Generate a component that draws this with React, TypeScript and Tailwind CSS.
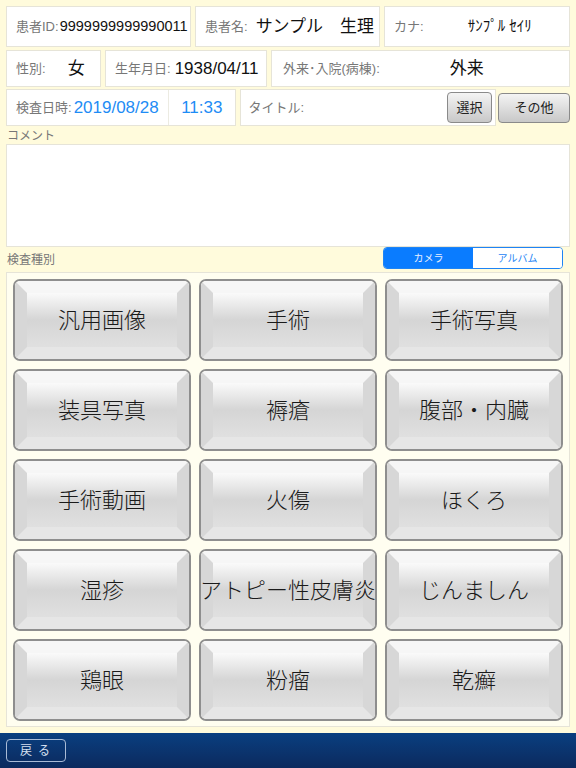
import React, { useState } from 'react';

const font = { fontFamily: '"Liberation Sans", "Noto Sans CJK JP", sans-serif' };

const categories = [
  '汎用画像', '手術', '手術写真',
  '装具写真', '褥瘡', '腹部・内臓',
  '手術動画', '火傷', 'ほくろ',
  '湿疹', 'アトピー性皮膚炎', 'じんましん',
  '鶏眼', '粉瘤', '乾癬',
];

function Cell({ className = '', children }: { className?: string; children: React.ReactNode }) {
  return (
    <div className={`bg-white border border-[#e6e4d8] flex items-center ${className}`}>{children}</div>
  );
}

function Label({ children, className = '' }: { children: React.ReactNode; className?: string }) {
  return <span className={`text-[13px] text-[#777] whitespace-nowrap ${className}`}>{children}</span>;
}

function BevelButton({ label }: { label: string }) {
  return (
    <button className="h-[82px] rounded-[7px] border-2 border-[#8e8e8e] overflow-hidden p-0 bg-[#ddd]">
      <div className="h-full w-full border-x-[12px] border-y-[12px] border-t-[#f6f6f6] border-b-[#e6e6e6] border-l-[#d7d7d7] border-r-[#d7d7d7] bg-gradient-to-b from-[#fafafa] via-[#d5d5d5] to-[#e0e0e0] flex items-center justify-center">
        <span className="text-[22px] font-light text-[#1a1a1a] whitespace-nowrap -mx-[12px]">{label}</span>
      </div>
    </button>
  );
}

export default function App() {
  const [source, setSource] = useState<'camera' | 'album'>('camera');

  return (
    <div style={font} className="w-[576px] h-[768px] bg-[#fffbdc] flex flex-col overflow-hidden">
      <div className="flex-1 px-[6px] pt-[6px] flex flex-col">
        {/* row 1 */}
        <div className="flex gap-[4px] h-[41px]">
          <Cell className="w-[185px] pl-[9px]">
            <Label>患者ID:</Label>
            <span className="text-[14.5px] text-[#111] ml-[1px]">9999999999990011</span>
          </Cell>
          <Cell className="w-[185px] pl-[9px]">
            <Label>患者名:</Label>
            <span className="text-[17px] text-[#111] ml-[8px] whitespace-nowrap">サンプル　生理</span>
          </Cell>
          <Cell className="flex-1 pl-[9px]">
            <Label>カナ:</Label>
            <span className="text-[15px] text-[#111] ml-[44px] whitespace-nowrap">ｻﾝﾌﾟﾙ ｾｲﾘ</span>
          </Cell>
        </div>

        {/* row 2 */}
        <div className="flex gap-[4px] h-[37px] mt-[3px]">
          <Cell className="w-[95px] pl-[9px]">
            <Label>性別:</Label>
            <span className="text-[17px] text-[#111] ml-[22px]">女</span>
          </Cell>
          <Cell className="w-[162px] pl-[9px]">
            <Label>生年月日:</Label>
            <span className="text-[17px] text-[#111] ml-[4px]">1938/04/11</span>
          </Cell>
          <Cell className="flex-1 pl-[11px]">
            <Label>外来･入院(病棟):</Label>
            <span className="text-[17px] text-[#111] ml-[70px]">外来</span>
          </Cell>
        </div>

        {/* row 3 */}
        <div className="flex h-[37px] mt-[2px] items-start">
          <Cell className="w-[230px] h-[37px]">
            <div className="w-[162px] h-full flex items-center pl-[9px] border-r border-[#ecebe2]">
              <Label>検査日時:</Label>
              <span className="text-[17px] text-[#1e8cf5] ml-[2px]">2019/08/28</span>
            </div>
            <div className="flex-1 flex items-center justify-center">
              <span className="text-[17px] text-[#1e8cf5]">11:33</span>
            </div>
          </Cell>
          <Cell className="ml-[4px] w-[257px] h-[37px] pl-[8px] pr-[3px] justify-between">
            <Label>タイトル:</Label>
            <button className="h-[31px] w-[45px] rounded-[4px] border border-[#8a8a8a] bg-gradient-to-b from-[#f4f4f4] to-[#c8c8c8] text-[13px] text-[#222]">
              選択
            </button>
          </Cell>
          <button className="ml-[2px] mt-[4px] h-[30px] w-[72px] rounded-[4px] border border-[#8a8a8a] bg-gradient-to-b from-[#f4f4f4] to-[#c8c8c8] text-[13px] text-[#222]">
            その他
          </button>
        </div>

        <div className="text-[12px] text-[#777] mt-[2px] pl-[1px] h-[16px] leading-[16px]">コメント</div>
        <div className="h-[103px] bg-white border border-[#e6e4d8]"></div>

        <div className="flex items-end justify-between mt-[1px] h-[24px]">
          <span className="text-[12px] text-[#777] pl-[1px] mb-[3px]">検査種別</span>
          <div className="flex w-[180px] h-[22px] mr-[7px] rounded-[4px] border border-[#1e84f5] overflow-hidden mb-[3px]">
            <button
              onClick={() => setSource('camera')}
              className={`flex-1 text-[10px] ${source === 'camera' ? 'bg-[#0a7cff] text-[#e8f0ff]' : 'bg-white text-[#1e84f5]'}`}
            >
              カメラ
            </button>
            <button
              onClick={() => setSource('album')}
              className={`flex-1 text-[10px] ${source === 'album' ? 'bg-[#0a7cff] text-[#e8f0ff]' : 'bg-white text-[#1e84f5]'}`}
            >
              アルバム
            </button>
          </div>
        </div>

        <div className="border border-[#e6e4d8] bg-[#fffef0] p-[6px] pb-[5px] grid grid-cols-3 gap-[8px]">
          {categories.map((c) => (
            <BevelButton key={c} label={c} />
          ))}
        </div>
      </div>

      <div className="h-[35px] bg-gradient-to-b from-[#093f80] to-[#0b2a5e] flex items-center px-[6px]">
        <button className="w-[60px] h-[23px] rounded-[4px] border border-[#a9bbd6] text-[12px] text-[#d6e0f0] tracking-[6px] pl-[4px]">
          戻る
        </button>
      </div>
    </div>
  );
}
